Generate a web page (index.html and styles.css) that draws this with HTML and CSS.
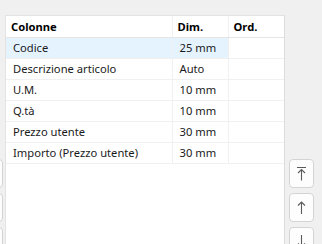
FILE: index.html
```html
<!DOCTYPE html>
<html>
<head>
<meta charset="UTF-8" />
<title>Colonne</title>
<link rel="stylesheet" href="styles.css">
</head>
<body>
<div class="layout">

<div class="sideButtons leftSide">
<button class="toolBtn" type="button"></button>
<button class="toolBtn" type="button"></button>
<button class="toolBtn" type="button"></button>
</div>

<div class="listPanel">
<table class="colTable">
<thead>
<tr>
<th class="cName">Colonne</th>
<th class="cDim">Dim.</th>
<th class="cOrd">Ord.</th>
</tr>
</thead>
<tbody>
<tr class="selected"><td>Codice</td><td>25 mm</td><td></td></tr>
<tr><td>Descrizione articolo</td><td>Auto</td><td></td></tr>
<tr><td>U.M.</td><td>10 mm</td><td></td></tr>
<tr><td>Q.tà</td><td>10 mm</td><td></td></tr>
<tr><td>Prezzo utente</td><td>30 mm</td><td></td></tr>
<tr><td>Importo (Prezzo utente)</td><td>30 mm</td><td></td></tr>
</tbody>
</table>
</div>

<div class="sideButtons rightSide">
<button class="toolBtn" type="button" title="Primo">
<svg width="13" height="15" viewBox="0 0 13 15"><path d="M2 1.5h9M6.5 3.5v11M3 7l3.5-3.5L10 7" fill="none" stroke="#5a5a5a" stroke-width="1.1"/></svg>
</button>
<button class="toolBtn" type="button" title="Su">
<svg width="13" height="15" viewBox="0 0 13 15"><path d="M6.5 2v12M3 5.5L6.5 2 10 5.5" fill="none" stroke="#5a5a5a" stroke-width="1.1"/></svg>
</button>
<button class="toolBtn" type="button" title="Giù">
<svg width="13" height="15" viewBox="0 0 13 15"><path d="M6.5 1v12M3 9.5L6.5 13 10 9.5" fill="none" stroke="#5a5a5a" stroke-width="1.1"/></svg>
</button>
</div>

</div>
</body>
</html>
```

FILE: styles.css
```css
html, body{
margin: 0;
height: 100%;
overflow: hidden;
}

body{
background: #f0f0f0;
font-family: "Noto Sans", "Liberation Sans", sans-serif;
font-size: 11.2px;
color: #1a1a1a;
}

.layout{
display: flex;
padding-top: 15px;
height: 100%;
box-sizing: border-box;
}

.sideButtons{
display: flex;
flex-direction: column;
gap: 5px;
padding-top: 144px;
overflow: hidden;
flex-shrink: 0;
}

.leftSide{
margin-left: -22px;
margin-right: 2px;
}

.rightSide{
margin-left: 4px;
}

.toolBtn{
flex-shrink: 0;
width: 25px;
height: 29px;
padding: 0;
border: 1px solid #d4d4d4;
border-radius: 4px;
background: #fdfdfd;
display: flex;
align-items: center;
justify-content: center;
}

.listPanel{
width: 280px;
flex-shrink: 0;
box-sizing: border-box;
background: #fff;
border: 1px solid #e3e3e3;
border-bottom: none;
border-right-color: #dcdcdc;
}

.colTable{
border-collapse: collapse;
width: 100%;
table-layout: fixed;
}

.colTable th, .colTable td{
box-sizing: border-box;
height: 21px;
padding: 0 0 0 7px;
text-align: left;
white-space: nowrap;
border-bottom: 1px solid #f0f0f0;
border-right: 1px solid #f0f0f0;
}

.colTable th{
font-weight: bold;
color: #000;
padding-left: 5px;
border-bottom-color: #e5e5e5;
}

.cName{
width: 166px;
}

.cDim{
width: 56px;
}

.colTable td:last-child, .colTable th:last-child{
border-right: none;
}

.selected td:first-child, .selected td:nth-child(2){
background: #e5f3ff;
}
```
